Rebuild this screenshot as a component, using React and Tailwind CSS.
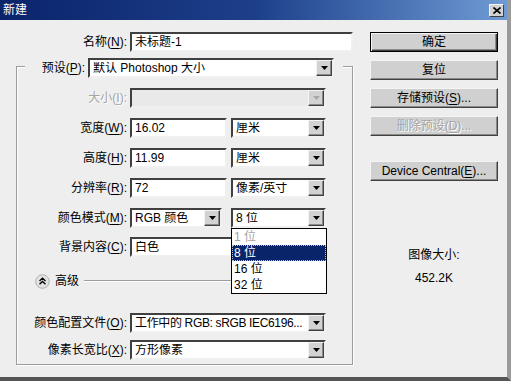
import React from "react";

// --- pequenos controlos no estilo Windows clássico ---
const U = ({ children }) => <span className="underline underline-offset-[2px]">{children}</span>;

const Arrow = ({ disabled }) => (
  <div className="w-[16px] h-[16px] shrink-0 bg-[#d2d2d2] border border-t-[#f4f4f4] border-l-[#f4f4f4] border-b-[#404040] border-r-[#404040] shadow-[inset_-1px_-1px_0_#8a8a8a] flex items-center justify-center">
    <svg width="7" height="4" viewBox="0 0 7 4">
      <polygon points="0,0 7,0 3.5,4" fill={disabled ? "#a8a8a8" : "#000"} />
    </svg>
  </div>
);

const Field = ({ children, className = "" }) => (
  <div className={`h-[20px] bg-white border-2 border-t-[#404040] border-l-[#404040] border-b-[#f0f0f0] border-r-[#f0f0f0] flex items-center pl-[3px] whitespace-nowrap overflow-hidden ${className}`}>
    {children}
  </div>
);

const Combo = ({ children, className = "", textClass = "", disabled }) => (
  <div className={`h-[20px] border-2 border-t-[#404040] border-l-[#404040] border-b-[#f0f0f0] border-r-[#f0f0f0] flex items-center ${disabled ? "bg-[#e9e9e9]" : "bg-white"} ${className}`}>
    <div className={`flex-1 pl-[3px] whitespace-nowrap overflow-hidden ${textClass}`}>{children}</div>
    <Arrow disabled={disabled} />
  </div>
);

const Btn = ({ children, def, disabled, className = "" }) => (
  <div className={`h-[20px] w-[128px] flex items-center justify-center bg-[#d0d0d0] ${def ? "border border-black shadow-[inset_1px_1px_0_#f4f4f4,inset_-1px_-1px_0_#404040,inset_-2px_-2px_0_#8a8a8a]" : "border border-t-[#f4f4f4] border-l-[#f4f4f4] border-b-[#404040] border-r-[#404040] shadow-[inset_-1px_-1px_0_#8a8a8a]"} ${disabled ? "text-[#a4a4a4] [text-shadow:1px_1px_0_#fff]" : "text-black"} ${className}`}>
    {children}
  </div>
);

const Row = ({ label, children, disabled, className = "" }) => (
  <div className={`flex items-center h-[20px] ${className}`}>
    <div className={`w-[113px] shrink-0 text-right pr-[3px] whitespace-nowrap ${disabled ? "text-[#a4a4a4] [text-shadow:1px_1px_0_#fff]" : ""}`}>{label}</div>
    {children}
  </div>
);

export default function App() {
  return (
    <div className="w-[511px] h-[381px] overflow-hidden bg-[#eeeeee] flex flex-col text-[12px] leading-none text-black border-r-[4px] border-r-[#9a9a9a] border-b-[4px] border-b-[#555] font-['Liberation_Sans','Noto_Sans_CJK_SC',sans-serif]">
      {/* barra de título */}
      <div className="h-[20px] shrink-0 flex items-center justify-between pl-[3px] pr-[3px] bg-gradient-to-r from-[#0a246a] via-[#1d3f8a] to-[#6f9bd4] text-white">
        <span>新建</span>
        <div className="w-[15px] h-[13px] bg-[#d2d2d2] border border-t-[#f4f4f4] border-l-[#f4f4f4] border-b-[#404040] border-r-[#404040] flex items-center justify-center">
          <svg width="8" height="7" viewBox="0 0 8 7">
            <path d="M0.5 0.5 L7.5 6.5 M7.5 0.5 L0.5 6.5" stroke="#000" strokeWidth="1.6" />
          </svg>
        </div>
      </div>

      <div className="flex flex-1">
        {/* coluna esquerda */}
        <div className="w-[360px] shrink-0 pt-[12px]">
          <div className="flex items-center h-[20px]">
            <div className="w-[130px] shrink-0 text-right pr-[3px]">
              名称(<U>N</U>):
            </div>
            <Field className="w-[223px]">未标题-1</Field>
          </div>

          <div className="mt-[14px] ml-[16px] w-[337px] h-[299px] border border-[#9c9c9c] shadow-[inset_1px_1px_0_#fff,1px_1px_0_#fff]">
            <div className="-mt-[9px] ml-[8px] w-[318px] h-[20px] bg-[#eeeeee] flex items-center">
              <div className="w-[63px] shrink-0 text-right pr-[3px] whitespace-nowrap">
                预设(<U>P</U>):
              </div>
              <Combo className="w-[246px]">默认 Photoshop 大小</Combo>
            </div>

            <Row label={<>大小(<U>I</U>):</>} disabled className="mt-[10px]">
              <Combo disabled className="w-[196px]" />
            </Row>
            <Row label={<>宽度(<U>W</U>):</>} className="mt-[10px]">
              <Field className="w-[97px]">16.02</Field>
              <Combo className="w-[95px] ml-[4px]">厘米</Combo>
            </Row>
            <Row label={<>高度(<U>H</U>):</>} className="mt-[10px]">
              <Field className="w-[97px]">11.99</Field>
              <Combo className="w-[95px] ml-[4px]">厘米</Combo>
            </Row>
            <Row label={<>分辨率(<U>R</U>):</>} className="mt-[10px]">
              <Field className="w-[97px]">72</Field>
              <Combo className="w-[95px] ml-[4px]">像素/英寸</Combo>
            </Row>
            <Row label={<>颜色模式(<U>M</U>):</>} className="mt-[10px]">
              <Combo className="w-[92px]">RGB 颜色</Combo>
              <div className="relative ml-[9px]">
                <Combo className="w-[95px]">8 位</Combo>
                {/* lista aberta */}
                <div className="absolute left-0 top-[20px] z-10 w-[96px] bg-white border border-black">
                  <div className="h-[16px] flex items-center pl-[2px] text-[#a4a4a4]">1 位</div>
                  <div className="h-[16px] flex items-center pl-[2px] bg-[#0a246a] text-white outline-1 outline-dotted outline-[#c0c0c0] -outline-offset-1">8 位</div>
                  <div className="h-[16px] flex items-center pl-[2px]">16 位</div>
                  <div className="h-[16px] flex items-center pl-[2px]">32 位</div>
                </div>
              </div>
            </Row>
            <Row label={<>背景内容(<U>C</U>):</>} className="mt-[9px]">
              <Combo className="w-[196px]">白色</Combo>
            </Row>

            <div className="mt-[16px] h-[16px] flex items-center">
              <svg width="15" height="15" viewBox="0 0 15 15" className="ml-[18px] shrink-0">
                <circle cx="7.5" cy="7.5" r="6.8" fill="#e2e2e2" stroke="#b0b0b0" />
                <path d="M4.5 7 L7.5 4.2 L10.5 7 M4.5 10.2 L7.5 7.4 L10.5 10.2" fill="none" stroke="#000" strokeWidth="1.3" />
              </svg>
              <span className="ml-[5px]">高级</span>
              <div className="ml-[5px] w-[238px] h-[2px] border-t border-t-[#9c9c9c] border-b border-b-white" />
            </div>

            <Row label={<>颜色配置文件(<U>O</U>):</>} className="mt-[24px]">
              <Combo className="w-[196px]" textClass="pl-[2px] tracking-[-0.35px]">工作中的 RGB: sRGB IEC6196...</Combo>
            </Row>
            <Row label={<>像素长宽比(<U>X</U>):</>} className="mt-[7px]">
              <Combo className="w-[196px]">方形像素</Combo>
            </Row>
          </div>
        </div>

        {/* coluna direita */}
        <div className="ml-[10px] pt-[12px] w-[128px] flex flex-col">
          <Btn def>确定</Btn>
          <Btn className="mt-[8px]">复位</Btn>
          <Btn className="mt-[8px]">
            存储预设(<U>S</U>)...
          </Btn>
          <Btn disabled className="mt-[8px]">
            删除预设(<U>D</U>)...
          </Btn>
          <Btn className="mt-[25px]">
            Device Central(<U>E</U>)...
          </Btn>
          <div className="mt-[68px] text-center">图像大小:</div>
          <div className="mt-[11px] text-center">452.2K</div>
        </div>
      </div>
    </div>
  );
}
